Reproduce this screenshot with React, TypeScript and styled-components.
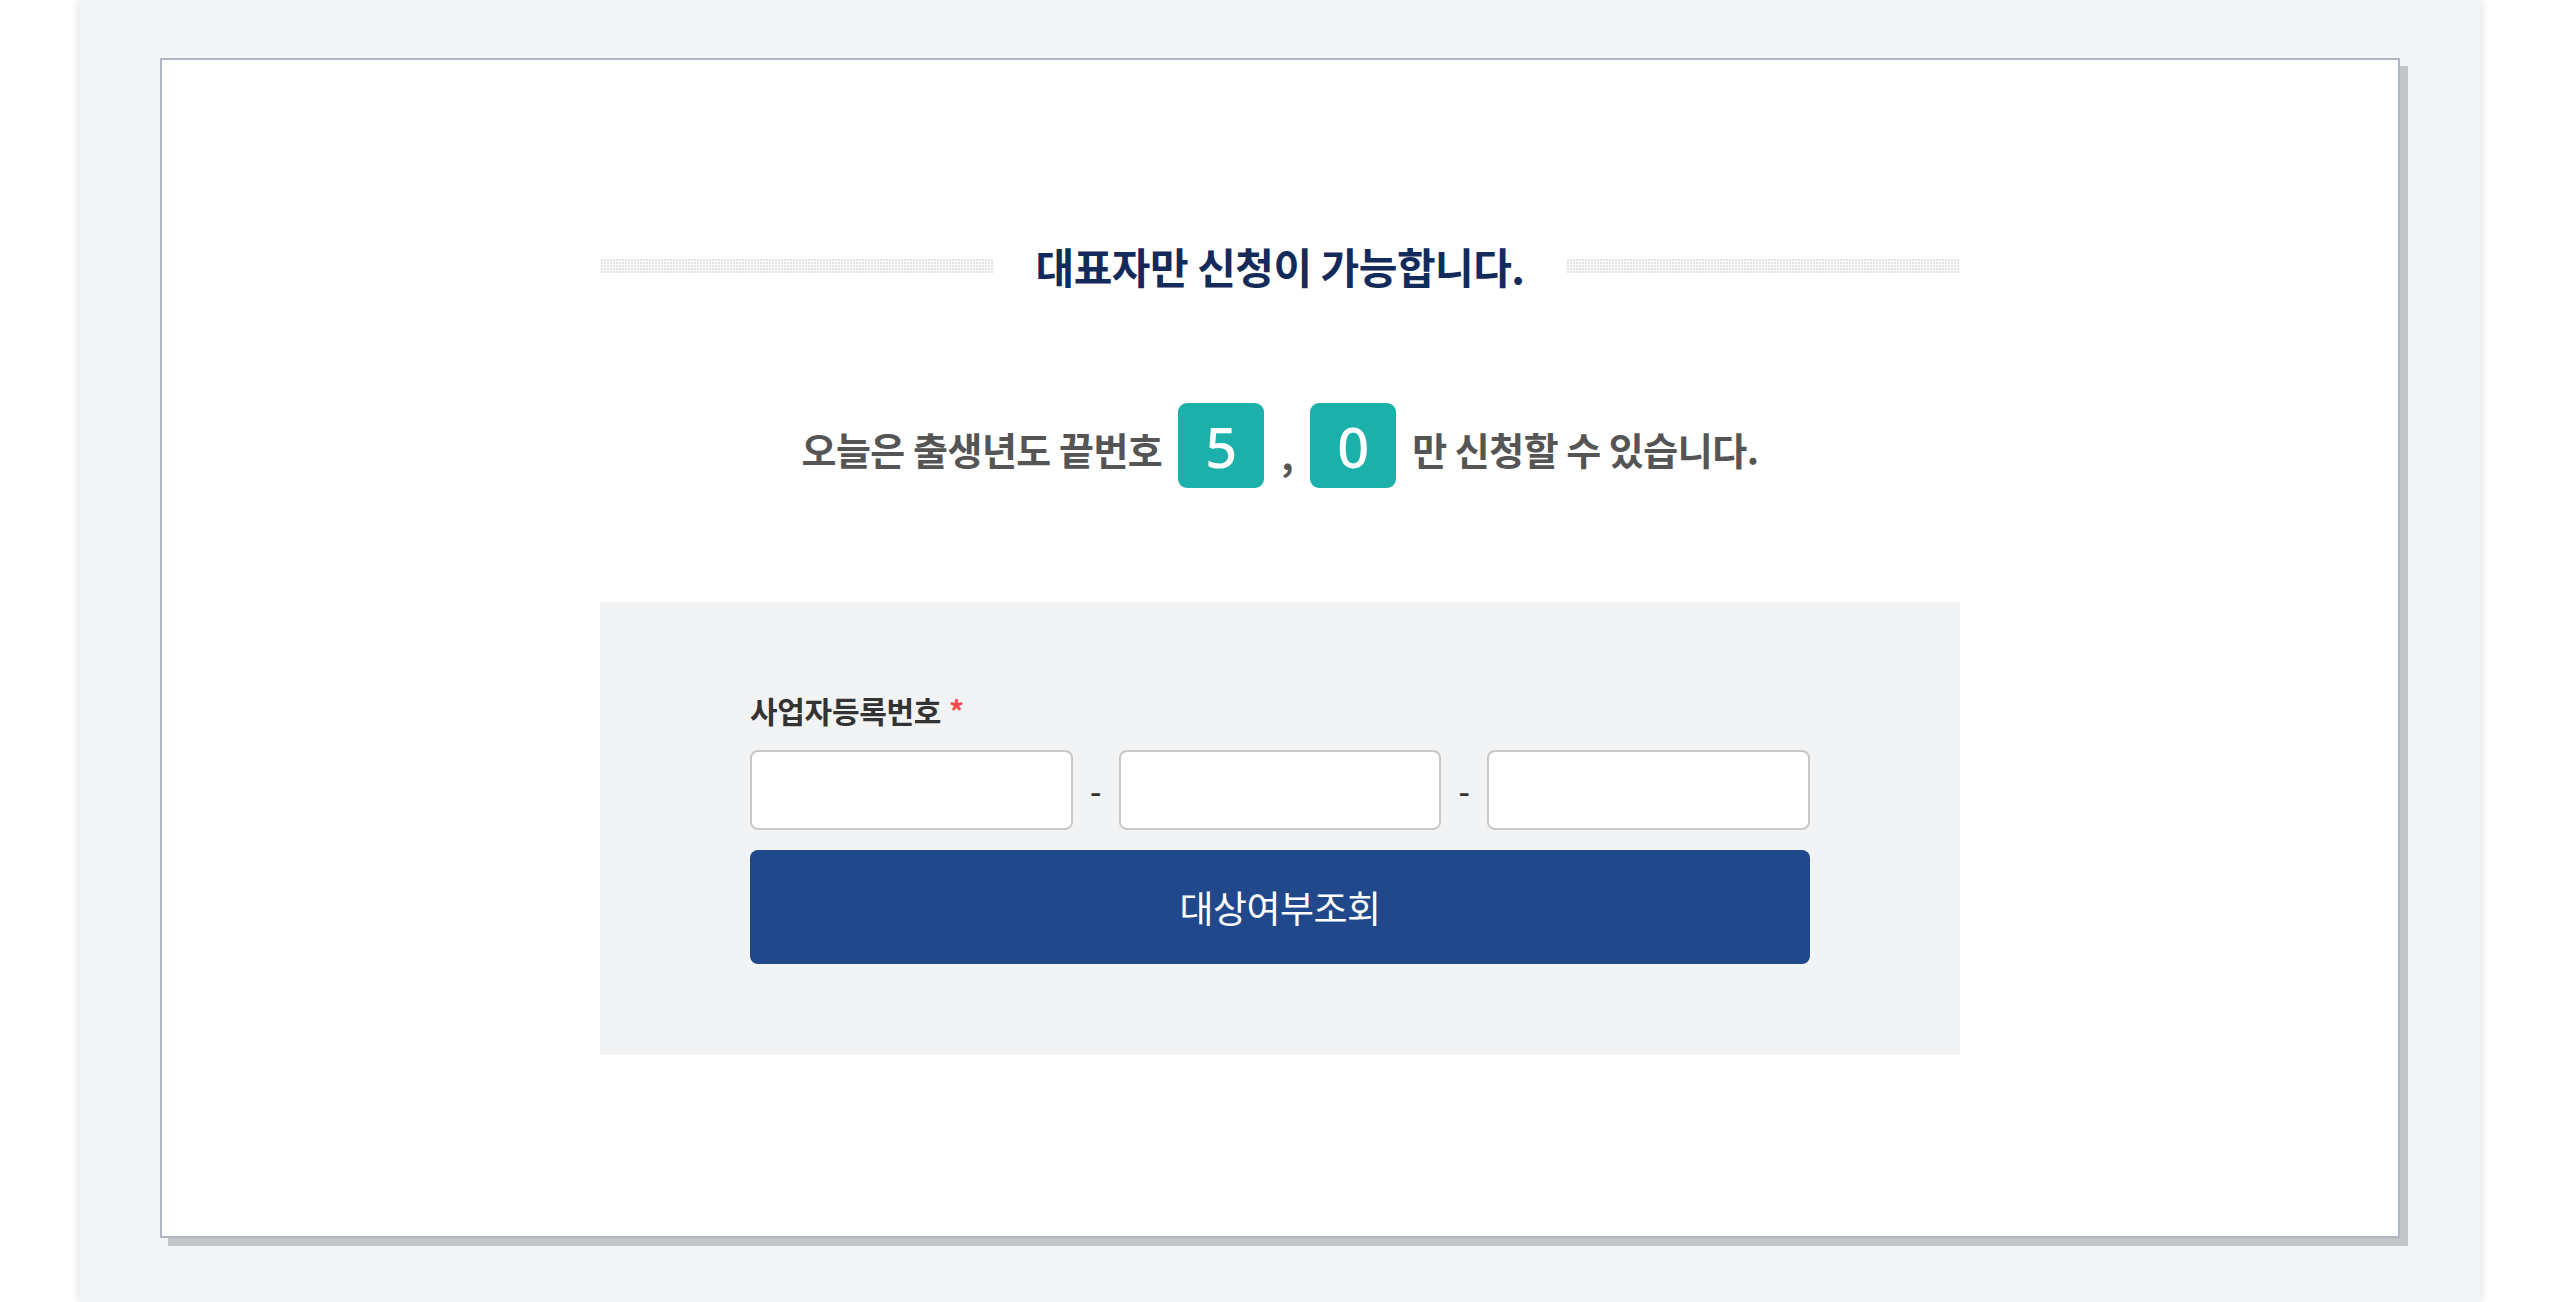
import React from "react";
import styled, { createGlobalStyle } from "styled-components";

const GlobalStyle = createGlobalStyle`
  html, body {
    margin: 0;
    padding: 0;
    background: #ffffff;
    font-family: "Noto Sans CJK KR", "Noto Sans", sans-serif;
  }
  * { box-sizing: border-box; }
`;

const Page = styled.div`
  display: flex;
  justify-content: center;
  min-height: 1302px;
`;

const Column = styled.main`
  width: 2400px;
  min-height: 1302px;
  background: #f4f5f7;
  box-shadow: 0 0 10px rgba(0, 0, 0, 0.14);
  padding: 58px 80px 0;
`;

const Card = styled.section`
  background: #ffffff;
  border: 2px solid #aeb6c3;
  box-shadow: 8px 8px 0 #c4c5c7;
  padding: 176px 0 181px;
  display: flex;
  flex-direction: column;
  align-items: center;
`;

const HeadingRow = styled.div`
  width: 1360px;
  height: 60px;
  display: flex;
  align-items: center;
  gap: 42px;
`;

const DotLine = styled.span`
  flex: 1;
  height: 15px;
  background-color: #e2e2e2;
  background-image:
    repeating-linear-gradient(90deg, #ffffff 0 1px, transparent 1px 3px),
    repeating-linear-gradient(0deg, #ffffff 0 1px, transparent 1px 3px);
`;

const Heading = styled.h2`
  margin: 0;
  font-size: 42px;
  line-height: 60px;
  font-weight: 700;
  color: #132b5a;
  letter-spacing: -0.5px;
  white-space: nowrap;
`;

const NoticeRow = styled.p`
  margin: 107px 0 0;
  height: 85px;
  display: flex;
  align-items: center;
  gap: 16px;
  font-size: 38px;
  font-weight: 700;
  color: #555555;
  letter-spacing: -0.5px;
  white-space: nowrap;
`;

const NoticeText = styled.span`
  padding-top: 6px;
`;

const Badge = styled.span`
  display: inline-flex;
  align-items: center;
  justify-content: center;
  width: 86px;
  height: 85px;
  border-radius: 9px;
  background: #1cb0ab;
  color: #ffffff;
  font-family: "Noto Sans", "Noto Sans CJK KR", sans-serif;
  font-size: 56px;
  font-weight: 500;
  letter-spacing: 0;
`;

const Comma = styled.span`
  padding: 16px 1px 0;
`;

const FormBox = styled.div`
  margin-top: 114px;
  width: 1360px;
  background: #f2f3f5;
  padding: 88px 150px 91px;
  display: flex;
  flex-direction: column;
`;

const Label = styled.label`
  font-size: 30px;
  line-height: 40px;
  font-weight: 700;
  color: #333333;
  letter-spacing: -0.3px;
`;

const Required = styled.span`
  color: #f24b4b;
  margin-left: 8px;
`;

const InputRow = styled.div`
  margin-top: 20px;
  display: grid;
  grid-template-columns: 1fr 46px 1fr 46px 1fr;
  align-items: center;
`;

const Field = styled.input`
  height: 80px;
  width: 100%;
  border: 2px solid #c8c8c8;
  border-radius: 8px;
  background: #ffffff;
  font-size: 28px;
  padding: 0 16px;
  outline: none;
`;

const Dash = styled.span`
  text-align: center;
  font-size: 32px;
  font-weight: 500;
  color: #333333;
`;

const SubmitButton = styled.button`
  margin-top: 20px;
  height: 114px;
  width: 100%;
  border: none;
  border-radius: 8px;
  background: #21488a;
  color: #ffffff;
  font-family: "Noto Sans CJK KR", sans-serif;
  font-size: 37px;
  font-weight: 400;
  letter-spacing: -0.5px;
  cursor: pointer;
`;

export default function App() {
  return (
    <>
      <GlobalStyle />
      <Page>
        <Column>
          <Card>
            <HeadingRow>
              <DotLine />
              <Heading>대표자만 신청이 가능합니다.</Heading>
              <DotLine />
            </HeadingRow>
            <NoticeRow>
              <NoticeText>오늘은 출생년도 끝번호</NoticeText>
              <Badge>5</Badge>
              <Comma>,</Comma>
              <Badge>0</Badge>
              <NoticeText>만 신청할 수 있습니다.</NoticeText>
            </NoticeRow>
            <FormBox>
              <Label>
                사업자등록번호<Required>*</Required>
              </Label>
              <InputRow>
                <Field type="text" aria-label="사업자등록번호 앞자리" />
                <Dash>-</Dash>
                <Field type="text" aria-label="사업자등록번호 가운데자리" />
                <Dash>-</Dash>
                <Field type="text" aria-label="사업자등록번호 뒷자리" />
              </InputRow>
              <SubmitButton type="button">대상여부조회</SubmitButton>
            </FormBox>
          </Card>
        </Column>
      </Page>
    </>
  );
}
